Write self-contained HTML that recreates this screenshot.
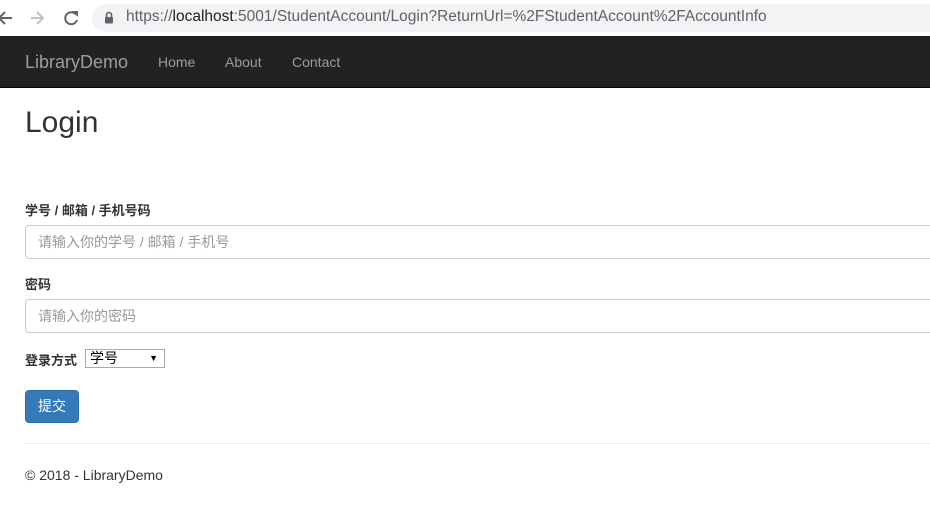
<!DOCTYPE html>
<html><head><meta charset="utf-8"><style>
*{box-sizing:border-box;margin:0;padding:0}
body{width:930px;height:508px;overflow:hidden;background:#fff;font-family:"Liberation Sans","Noto Sans CJK SC",sans-serif;font-size:14px;color:#333;position:relative}
.abs{position:absolute}
.chrome{left:0;top:0;width:930px;height:36px;background:#fff}
.url{left:92px;top:4px;width:900px;height:28px;border-radius:14px;background:#f1f3f4;}
.urltext{left:126px;top:8px;font-size:15.5px;color:#5f6368;white-space:nowrap}
.urltext b{font-weight:normal;color:#202124}
.nav{left:0;top:36px;width:930px;height:52px;background:#222;border-bottom:1px solid #080808}
.brand{left:25px;top:52px;font-size:18px;color:#9d9d9d}
.nl{top:54px;font-size:14px;color:#9d9d9d}
h2{position:absolute;left:25px;top:106px;font-size:30px;font-weight:500;color:#333}
label{position:absolute;left:25px;font-weight:bold;font-size:13px;color:#333}
.inp{position:absolute;left:25px;width:920px;height:34px;border:1px solid #ccc;border-radius:4px;padding:0 12px;line-height:32px;color:#999;font-size:14px}
.sel{left:85px;top:349px;width:80px;height:19px;border:1px solid #a9a9a9;font-size:14px;line-height:17px;padding-left:4px;color:#000}
.btn{left:25px;top:390px;width:54px;height:33px;background:#337ab7;border:1px solid #2e6da4;border-radius:4px;color:#fff;font-size:14px;text-align:center;line-height:31px}
hr{position:absolute;left:25px;top:443px;width:905px;border:0;border-top:1px solid #eee}
.foot{left:25px;top:467px;font-size:14px;color:#333}
</style></head><body>
<div class="abs chrome"></div>
<svg class="abs" style="left:0;top:8px" width="90" height="20" viewBox="0 0 90 20">
<path d="M12 10H0M5 4L-1 10L5 16" stroke="#5f6368" stroke-width="2" fill="none"/>
<path d="M31 10H43M37 4L43 10L37 16" stroke="#bdc1c6" stroke-width="2" fill="none"/>
<path d="M76 6.5A6 6 0 1 0 77 12" stroke="#5f6368" stroke-width="2" fill="none"/><path d="M72 3L78 3L78 9Z" fill="#5f6368"/>
</svg>
<div class="abs url"></div>
<svg class="abs" style="left:104px;top:11px" width="10" height="13" viewBox="0 0 10 13"><path d="M2.5 6V4A2.5 2.5 0 0 1 7.5 4V6" stroke="#5f6368" stroke-width="1.6" fill="none"/><rect x="1" y="6" width="8" height="6.5" rx="1" fill="#5f6368"/></svg>
<div class="abs urltext">https://<b>localhost</b>:5001/StudentAccount/Login?ReturnUrl=%2FStudentAccount%2FAccountInfo</div>
<div class="abs nav"></div>
<div class="abs brand">LibraryDemo</div>
<div class="abs nl" style="left:158px">Home</div>
<div class="abs nl" style="left:225px">About</div>
<div class="abs nl" style="left:292px">Contact</div>
<h2>Login</h2>
<label style="top:200px">学号 / 邮箱 / 手机号码</label>
<div class="inp" style="top:225px">请输入你的学号 / 邮箱 / 手机号</div>
<label style="top:274px">密码</label>
<div class="inp" style="top:299px">请输入你的密码</div>
<label style="top:350px">登录方式</label>
<div class="abs sel">学号<span style="position:absolute;right:6px;top:0;font-size:9px">▼</span></div>
<div class="abs btn">提交</div>
<hr>
<div class="abs foot">© 2018 - LibraryDemo</div>
</body></html>
